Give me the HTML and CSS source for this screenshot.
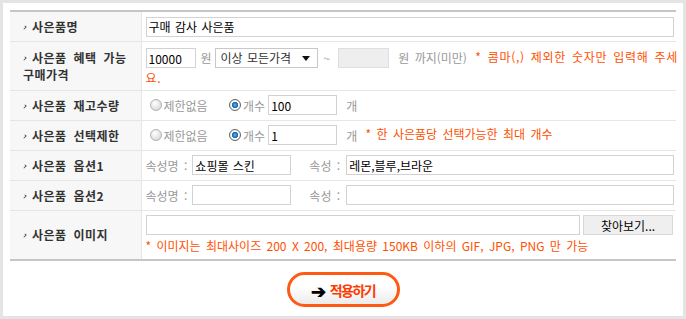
FILE: index.html
```html
<!DOCTYPE html>
<html lang="ko">
<head>
    <meta charset="UTF-8">
    <title>사은품 등록</title>
    <link rel="stylesheet" href="styles.css">
</head>
<body>
    <div id="panel">
        <table id="giftTable">
            <colgroup><col class="colLabel"><col></colgroup>
            <tr class="rowSmall">
                <th><span class="bullet"></span>사은품명</th>
                <td><input type="text" class="txt full" value="구매 감사 사은품"></td>
            </tr>
            <tr class="rowPrice">
                <th><span class="bullet"></span>사은품 혜택 가능<br>구매가격</th>
                <td>
                    <input type="text" class="txt price" value="10000"><span class="unit">원</span><span class="selectBox">이상 모든가격<span class="caret"></span></span><span class="tilde">~</span><input type="text" class="txt price off" disabled><span class="unit gap">원 까지(미만)</span> <span class="notice wide">* 콤마(,) 제외한 숫자만 입력해 주세</span><br><span class="notice wide">요.</span>
                </td>
            </tr>
            <tr class="rowSmall">
                <th><span class="bullet"></span>사은품 재고수량</th>
                <td>
                    <label class="radio"><input type="radio" name="stock">제한없음</label>
                    <label class="radio"><input type="radio" name="stock" checked>개수</label><input type="text" class="txt count" value="100"><span class="unit gap">개</span>
                </td>
            </tr>
            <tr class="rowSmall">
                <th><span class="bullet"></span>사은품 선택제한</th>
                <td>
                    <label class="radio"><input type="radio" name="limit">제한없음</label>
                    <label class="radio"><input type="radio" name="limit" checked>개수</label><input type="text" class="txt count" value="1"><span class="unit gap">개</span> <span class="notice">* 한 사은품당 선택가능한 최대 개수</span>
                </td>
            </tr>
            <tr class="rowSmall">
                <th><span class="bullet"></span>사은품 옵션1</th>
                <td class="optCell">
                    <span class="unit first">속성명 :</span><input type="text" class="txt optName" value="쇼핑몰 스킨"><span class="unit attr">속성 :</span><input type="text" class="txt optValue" value="레몬,블루,브라운">
                </td>
            </tr>
            <tr class="rowSmall">
                <th><span class="bullet"></span>사은품 옵션2</th>
                <td class="optCell">
                    <span class="unit first">속성명 :</span><input type="text" class="txt optName"><span class="unit attr">속성 :</span><input type="text" class="txt optValue">
                </td>
            </tr>
            <tr class="rowImage">
                <th><span class="bullet"></span>사은품 이미지</th>
                <td>
                    <div class="fileLine"><input type="text" class="txt fileName"><button type="button" class="findButton">찾아보기...</button></div>
                    <p class="notice">* 이미지는 최대사이즈 200 X 200, 최대용량 150KB 이하의 GIF, JPG, PNG 만 가능</p>
                </td>
            </tr>
        </table>
        <div id="buttonArea">
            <button type="button" class="applyButton"><span class="arrow">➔</span>적용하기</button>
        </div>
    </div>
</body>
</html>
```

FILE: styles.css
```css
* {
    margin: 0px;
    padding: 0px;
    box-sizing: border-box;
}
html, body {
    height: 100%;
}
body {
    background-color: #e4e4e4;
    padding: 3px;
    font-family: "Noto Sans CJK KR", "Noto Sans", sans-serif;
    font-size: 12px;
    color: #999;
}
#panel {
    background-color: #fff;
    height: 313px;
    padding: 7px 7px 0px 7px;
}
#giftTable {
    width: 666px;
    table-layout: fixed;
    border-collapse: collapse;
    border-top: 2px solid #c6c6c6;
    border-bottom: 2px solid #c6c6c6;
}
.colLabel {
    width: 131px;
}
#giftTable th {
    background-color: #f7f7f7;
    color: #333;
    font-weight: bold;
    text-align: left;
    padding: 0px 0px 0px 13px;
    line-height: 17px;
    letter-spacing: 0.5px;
    word-spacing: 3px;
    border-right: 1px solid #e6e6e6;
    border-bottom: 1px solid #e6e6e6;
}
#giftTable td {
    padding: 0px 3px 0px 4px;
    border-bottom: 1px solid #e6e6e6;
    white-space: nowrap;
    word-spacing: 2px;
}
.rowSmall th, .rowSmall td {
    height: 30px;
}
.rowPrice th, .rowPrice td {
    height: 49px;
}
#giftTable .rowPrice td {
    line-height: 20px;
    vertical-align: top;
    padding-top: 5px;
}
.rowImage th, .rowImage td {
    height: 50px;
}
.bullet {
    display: inline-block;
    width: 3px;
    height: 5px;
    margin: 0px 6px 2px 0px;
    vertical-align: middle;
    border-right: 1.5px solid #333;
    border-top: 1.5px solid #333;
    transform: rotate(45deg) scale(0.7);
}
.txt {
    height: 20px;
    border: 1px solid #d2d2d2;
    font-family: "Noto Sans CJK KR", sans-serif;
    font-size: 12px;
    color: #000;
    padding: 0px 2px;
    vertical-align: middle;
    outline: none;
    word-spacing: 1px;
}
.full {
    width: 528px;
}
.price {
    width: 50px;
}
.off {
    width: 51px;
    background-color: #eee;
    border-color: #dedede;
}
.unit {
    vertical-align: middle;
    margin: 0px 3px 0px 5px;
}
.unit.gap {
    margin-left: 9px;
}
.unit.first {
    margin-left: 0px;
    margin-right: 5px;
}
.selectBox {
    display: inline-block;
    position: relative;
    width: 103px;
    height: 20px;
    line-height: 18px;
    border: 1px solid #c8c8c8;
    color: #333;
    font-size: 12px;
    padding-left: 5px;
    vertical-align: middle;
    word-spacing: 1px;
}
.caret {
    position: absolute;
    right: 7px;
    top: 7px;
    border-left: 4px solid transparent;
    border-right: 4px solid transparent;
    border-top: 5px solid #111;
}
.tilde {
    vertical-align: middle;
    margin: 0px 8px 0px 6px;
    color: #aaa;
}
.notice {
    color: #ff5000;
}
.notice.wide {
    letter-spacing: 0.7px;
}
.radio {
    display: inline-flex;
    align-items: center;
    vertical-align: middle;
    margin-right: 12px;
}
.radio + .radio {
    margin-right: 3px;
}
.radio input {
    appearance: none;
    width: 12px;
    height: 12px;
    border-radius: 50%;
    border: 1px solid #b3b3b3;
    background: radial-gradient(circle at 40% 35%, #fff 0%, #ddd 70%, #c8c8c8 100%);
    margin: 0px 2px 0px 4px;
}
.radio input:checked {
    border-color: #666;
    background: radial-gradient(circle at 50% 50%, #5fb4f2 0%, #1064b5 40%, #fff 50%, #ddd 80%, #999 100%);
}
.count {
    width: 69px;
}
.optName {
    width: 99px;
}
.attr {
    margin-left: 18px;
    margin-right: 6px;
}
.optValue {
    width: 328px;
}
.fileLine {
    display: flex;
    gap: 3px;
}
.fileName {
    width: 435px;
}
.findButton {
    width: 90px;
    height: 20px;
    border: 1px solid #d8d8d8;
    background-color: #efefef;
    font-family: "Noto Sans CJK KR", sans-serif;
    font-size: 12px;
    color: #000;
}
.rowImage .notice {
    margin-top: 2px;
    line-height: 17px;
}
#buttonArea {
    display: flex;
    justify-content: center;
    padding-top: 11px;
}
.applyButton {
    width: 113px;
    height: 35px;
    border: 3px solid #ff5a14;
    border-radius: 18px;
    background: linear-gradient(#fff 40%, #ececec);
    color: #ff3a00;
    font-family: "Noto Sans CJK KR", sans-serif;
    font-size: 14px;
    font-weight: bold;
    letter-spacing: -1.5px;
    display: flex;
    align-items: center;
    justify-content: center;
}
.arrow {
    color: #000;
    font-size: 18px;
    margin-right: 4px;
    letter-spacing: 0px;
}
```
